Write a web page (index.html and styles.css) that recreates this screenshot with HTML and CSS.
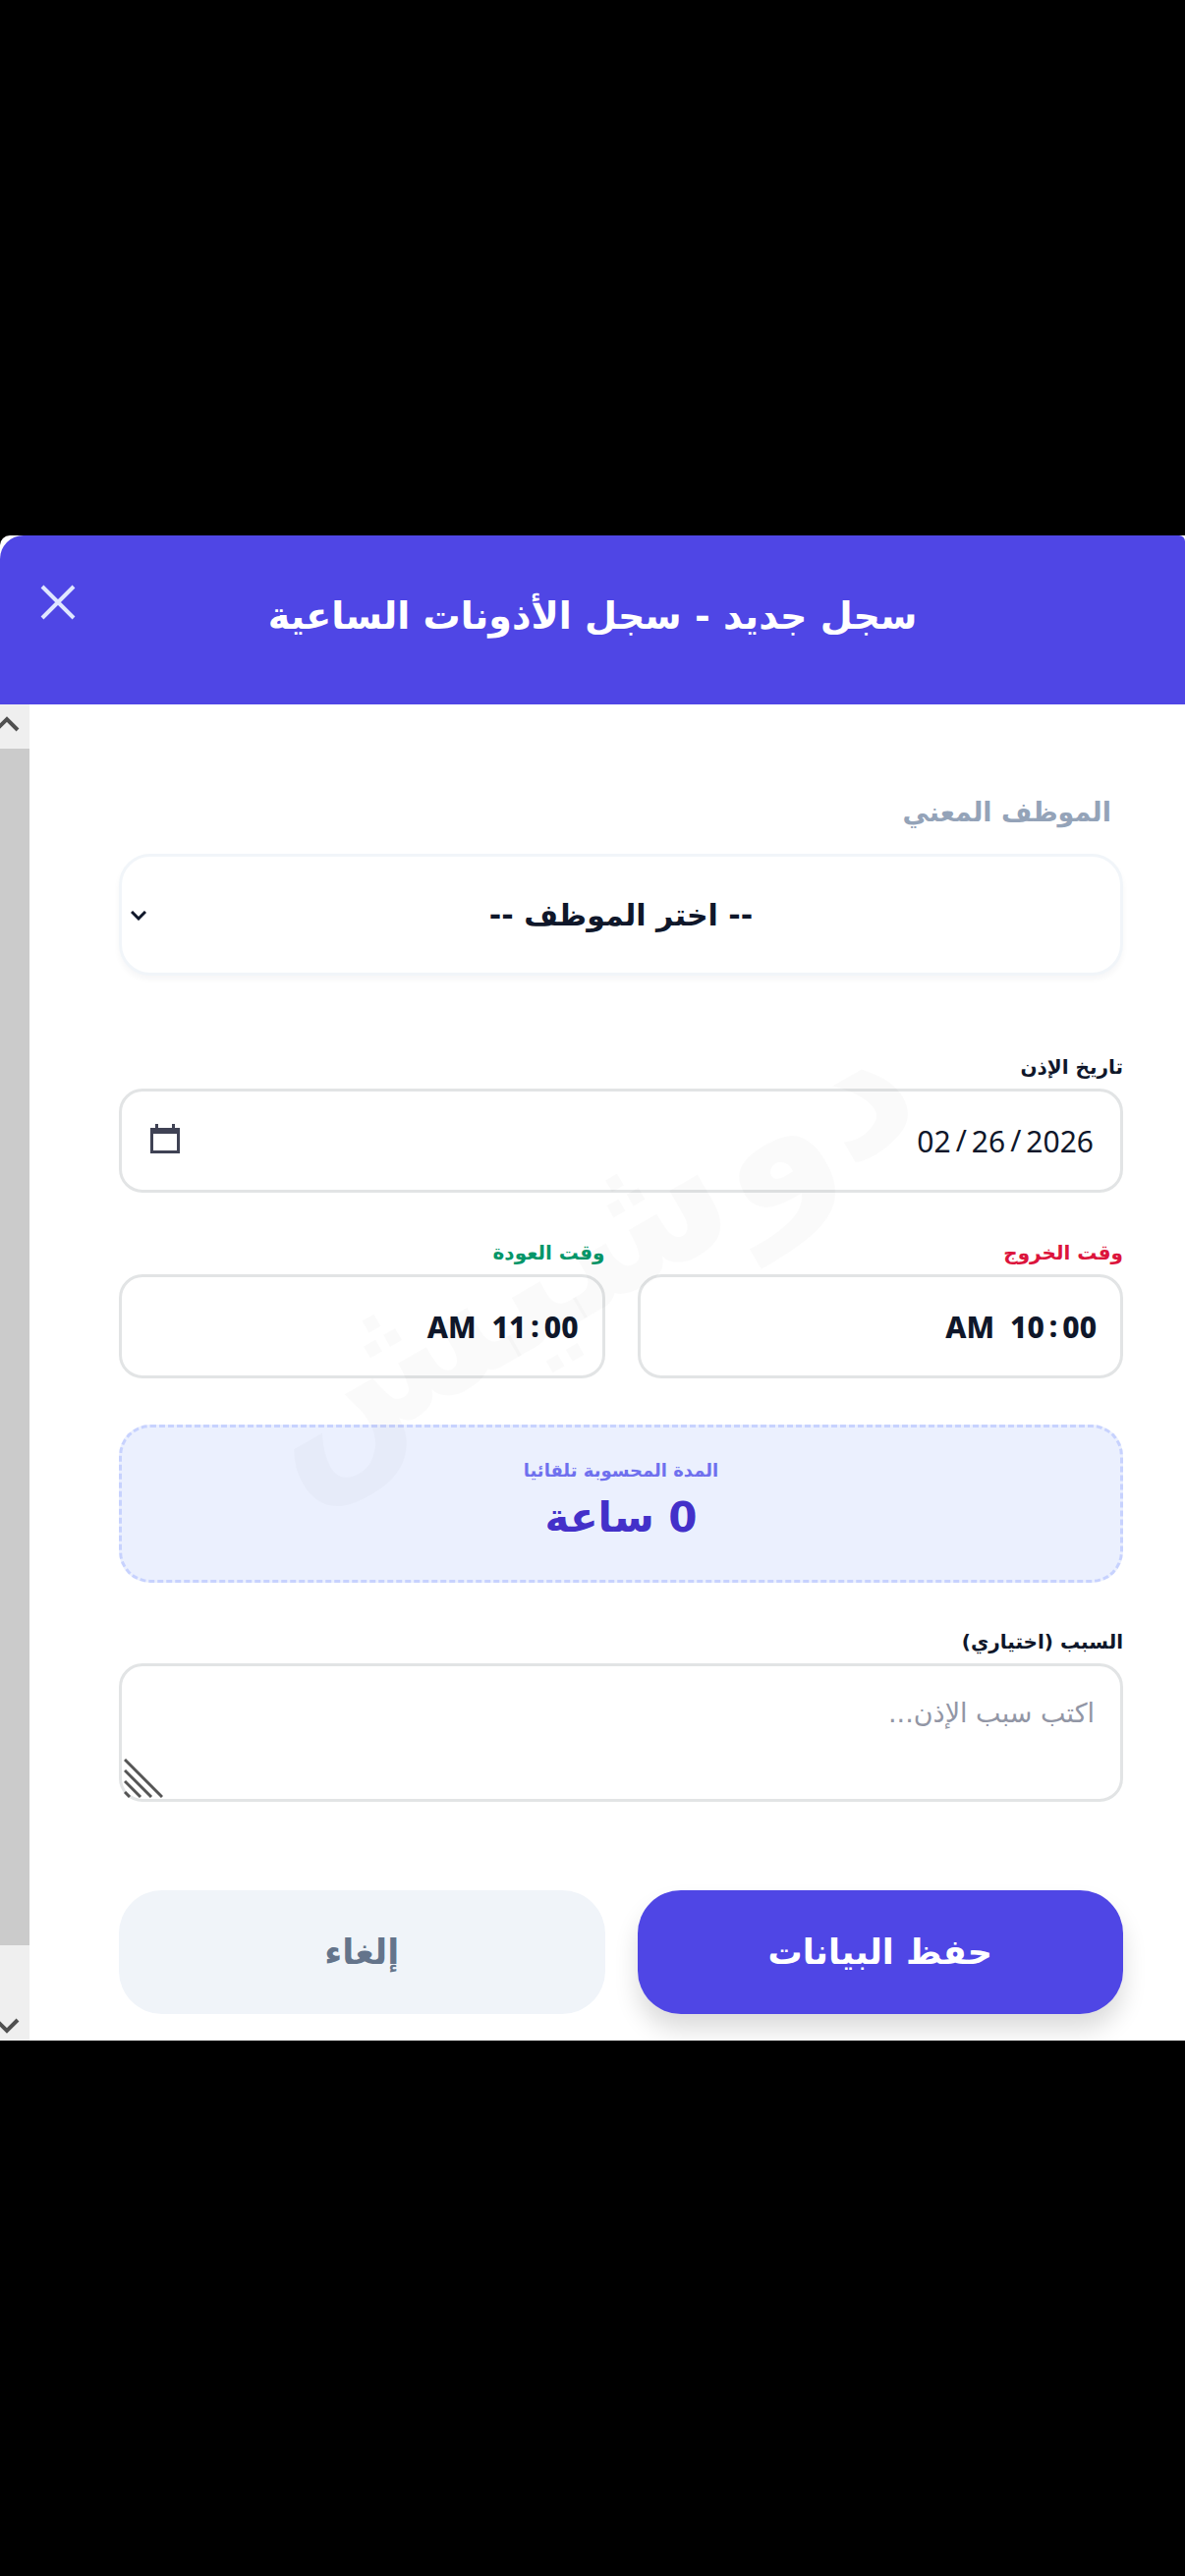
FILE: index.html
```html
<!DOCTYPE html>
<html lang="ar" dir="rtl">
<head>
  <meta charset="UTF-8">
  <meta name="viewport" content="width=device-width, initial-scale=1.0">
  <title>سجل الأذونات الساعية</title>
  <link rel="stylesheet" href="styles.css">
</head>
<body>
  <div class="backdrop">
    <div class="modal" role="dialog" aria-labelledby="modalTitle">
      <header class="modal-header">
        <h1 id="modalTitle">سجل جديد - سجل الأذونات الساعية</h1>
        <button type="button" class="close-btn" aria-label="إغلاق">
          <svg viewBox="0 0 36 36"><path d="M2 2L34 34M34 2L2 34" /></svg>
        </button>
      </header>

      <div class="modal-body">
        <form class="form">
          <div class="field">
            <label class="label-main" for="employee">الموظف المعني</label>
            <div class="select-wrap">
              <select id="employee" class="control select">
                <option>-- اختر الموظف --</option>
              </select>
              <svg class="chevron" viewBox="0 0 16 10"><path d="M1 1L8 8L15 1" /></svg>
            </div>
          </div>

          <div class="field">
            <label for="date">تاريخ الإذن</label>
            <div class="date-wrap">
              <input type="date" id="date" class="control" value="2026-02-26">
              <svg class="calendar" viewBox="0 0 30 30">
                <path d="M5 0h3v4h14V0h3v4h5v26H0V4h5zM3 10v17h24V10z" />
              </svg>
            </div>
          </div>

          <div class="columns">
            <div class="field">
              <label class="label-out" for="timeOut">وقت الخروج</label>
              <input type="time" id="timeOut" class="control time" value="10:00">
            </div>
            <div class="field">
              <label class="label-back" for="timeBack">وقت العودة</label>
              <input type="time" id="timeBack" class="control time" value="11:00">
            </div>
          </div>

          <div class="duration">
            <span class="duration-label">المدة المحسوبة تلقائيا</span>
            <strong class="duration-value">0 ساعة</strong>
          </div>

          <div class="field">
            <label for="reason">السبب (اختياري)</label>
            <div class="reason-wrap">
              <textarea id="reason" class="control reason" placeholder="اكتب سبب الإذن..."></textarea>
              <svg class="grip" viewBox="0 0 40 40"><path d="M1 1L39 39M1 12L28 39M1 23L17 39M1 34L6 39" /></svg>
            </div>
          </div>

          <div class="columns actions">
            <button type="submit" class="btn btn-save">حفظ البيانات</button>
            <button type="button" class="btn btn-cancel">إلغاء</button>
          </div>
          <div class="watermark" aria-hidden="true">دوشيش</div>
        </form>

        <div class="scrollbar" aria-hidden="true">
          <div class="scroll-arrow"><svg viewBox="0 0 20 16"><path d="M-4 14L7 3L18 14" /></svg></div>
          <div class="scroll-thumb"></div>
          <div class="scroll-arrow scroll-down"><svg viewBox="0 0 20 16"><path d="M-4 2L7 13L18 2" /></svg></div>
        </div>
      </div>
    </div>
  </div>
</body>
</html>
```

FILE: styles.css
```css
* {
  box-sizing: border-box;
}
body {
  margin: 0;
  background: #000;
  font-family: "DejaVu Sans", sans-serif;
  color: #0f172a;
}
.backdrop {
  display: flex;
  flex-direction: column;
  justify-content: center;
  min-height: 100vh;
}
.modal {
  background: #fff;
  overflow: hidden;
  border-top-left-radius: 10px;
}

/* Header */
.modal-header {
  position: relative;
  display: flex;
  justify-content: center;
  height: 172px;
  padding: 52px 0 0;
  background: #4f46e5;
  border-top-left-radius: 24px;
  border-top-right-radius: 6px;
  color: #fff;
}
h1 {
  margin: 0;
  font-size: 38px;
  line-height: 60px;
}
.close-btn {
  position: absolute;
  left: 41px;
  top: 50px;
  width: 36px;
  height: 36px;
  padding: 0;
  border: 0;
  background: none;
}
svg {
  display: block;
  fill: none;
  stroke: #e0e7ff;
  stroke-width: 4;
}

/* Form */
.modal-body {
  display: flex;
}
.form {
  position: relative;
  flex: 1;
  display: flex;
  flex-direction: column;
  padding: 92px 63px 27px 91px;
}
.field {
  display: flex;
  flex-direction: column;
}
label {
  padding-bottom: 4px;
  font-size: 20px;
  font-weight: bold;
  line-height: 36px;
  color: #0f172a;
}
.label-main {
  padding: 0 12px;
  margin-bottom: 24px;
  font-size: 27px;
  color: #94a3b8;
}
.label-out {
  color: #dc143c;
}
.label-back {
  color: #059669;
}
.control {
  display: block;
  width: 100%;
  height: 106px;
  padding: 0 26px;
  border: 3px solid #e2e4e5;
  border-radius: 24px;
  background: #fff;
  color: #0f172a;
  font-family: "Noto Sans", "DejaVu Sans", sans-serif;
  font-size: 30px;
}
.select-wrap, .date-wrap, .reason-wrap {
  position: relative;
}
.select {
  appearance: none;
  height: 124px;
  border-color: #f1f5f9;
  border-radius: 32px;
  box-shadow: 0 4px 6px rgba(15, 23, 42, 0.04);
  font-family: "DejaVu Sans", sans-serif;
  font-weight: bold;
  text-align: center;
  text-align-last: center;
}
.chevron {
  position: absolute;
  left: 12px;
  top: 58px;
  width: 16px;
  height: 10px;
  stroke: #0f172a;
  stroke-width: 3;
}
.select-wrap {
  margin-bottom: 75px;
}
.calendar {
  position: absolute;
  left: 32px;
  top: 36px;
  width: 30px;
  height: 30px;
  fill: #3f4254;
  fill-rule: evenodd;
  stroke: none;
}
.date-wrap {
  margin-bottom: 43px;
}
input::-webkit-calendar-picker-indicator {
  display: none;
}
input::-webkit-datetime-edit {
  width: 100%;
  text-align: right;
}
input::-webkit-datetime-edit-fields-wrapper {
  display: flex;
  width: 100%;
  direction: ltr;
  justify-content: flex-end;
}
input::-webkit-datetime-edit-text {
  padding: 0 4px;
}
/* AM/PM sits to the left of the digits */
input::-webkit-datetime-edit-ampm-field {
  order: -1;
  margin-right: 14px;
}
.time {
  padding-right: 10px;
  font-weight: 800;
}
.columns {
  display: grid;
  grid-template-columns: 1fr 1fr;
  gap: 33px;
}
.duration {
  display: flex;
  flex-direction: column;
  align-items: center;
  height: 161px;
  margin: 47px 0 42px;
  padding-top: 28px;
  border: 3px dashed #c7d2fe;
  border-radius: 32px;
  background: #ebf0fe;
}
.duration-label {
  font-size: 18px;
  font-weight: bold;
  line-height: 32px;
  color: #6f70ee;
}
.duration-value {
  font-size: 42px;
  line-height: 64px;
  color: #4330c9;
}
.reason {
  height: 141px;
  padding-top: 32px;
  font-family: "DejaVu Sans", sans-serif;
  font-size: 27px;
  resize: none;
}
.reason::placeholder {
  color: #9296a5;
}
.grip {
  position: absolute;
  left: 5px;
  bottom: 4px;
  width: 40px;
  height: 40px;
  stroke: #555;
  stroke-width: 3;
}
.actions {
  margin-top: 90px;
}
.btn {
  height: 126px;
  border: 0;
  border-radius: 44px;
  font-family: inherit;
  font-size: 35px;
  font-weight: bold;
}
.btn-save {
  background: #4f46e5;
  color: #fff;
  box-shadow: 0 16px 24px rgba(0, 0, 0, 0.14);
}
.btn-cancel {
  background: #f0f4f9;
  color: #64748b;
}
.watermark {
  position: absolute;
  left: 184px;
  top: 364px;
  font-size: 190px;
  font-weight: bold;
  line-height: 380px;
  color: rgba(0, 0, 0, 0.02);
  transform: rotate(-30deg);
  pointer-events: none;
}

/* Scrollbar */
.scrollbar {
  display: flex;
  flex-direction: column;
  width: 30px;
  background: #efefef;
}
.scroll-arrow {
  height: 45px;
  padding-top: 12px;
}
.scroll-arrow svg {
  width: 20px;
  height: 16px;
  margin-right: 10px;
  stroke: #505050;
}
.scroll-thumb {
  flex: 1;
  background: #cbcbcb;
}
.scroll-down {
  height: 97px;
  padding-top: 74px;
}
```
